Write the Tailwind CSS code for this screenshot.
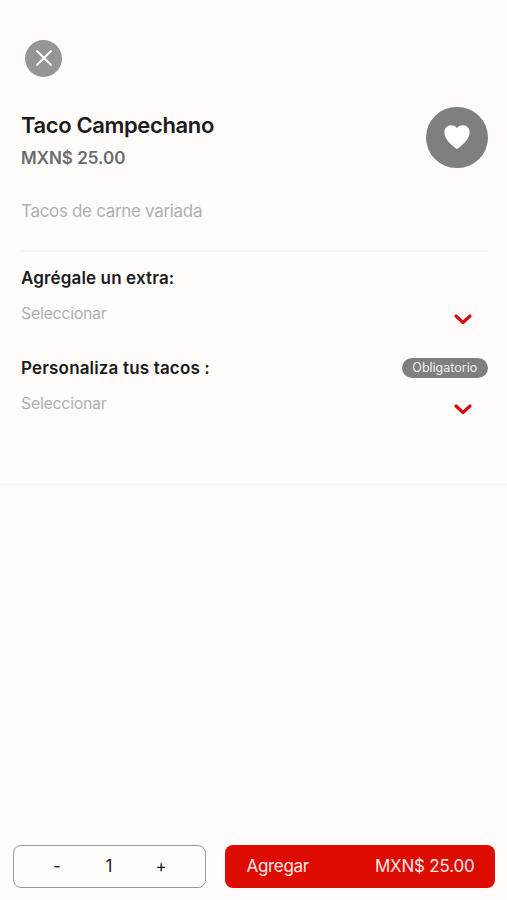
<!DOCTYPE html>
<html lang="es">
<head>
<meta charset="utf-8">
<title>Taco Campechano</title>
<script src="https://cdn.jsdelivr.net/npm/@tailwindcss/browser@4"></script>
</head>
<body class="bg-[#fffcfb]">
<div class="flex h-[900px] w-[507px] flex-col overflow-hidden bg-[#fffcfb] font-['Inter',sans-serif] text-[#1b1b1b]">
  <header class="flex h-[98px] shrink-0 items-start justify-between">
    <button aria-label="Cerrar" class="ml-[25px] mt-[39.5px] flex size-[37px] items-center justify-center rounded-full bg-[#969696]">
      <svg class="size-4" viewBox="0 0 16 16" fill="none" stroke="#fff" stroke-width="1.9" stroke-linecap="round"><path d="M1 1l14 14M15 1L1 15"/></svg>
    </button>
    <div class="mr-[13px] mt-[9px] h-[6px] w-[22px] rounded-sm bg-white"></div>
  </header>
  <main class="flex h-[388px] shrink-0 flex-col border-b-[3px] border-[#f8f6f5] pl-[21px] pr-[19.5px]">
    <section class="flex h-[154px] justify-between border-b-2 border-[#f8f6f5]">
      <div class="whitespace-nowrap">
        <h1 class="mt-[11px] text-[22px] font-semibold leading-[32px] tracking-[-0.37px]">Taco Campechano</h1>
        <p class="mt-[5px] text-[17px] font-semibold leading-[24px] text-[#6b6b6b]">MXN$ 25.00</p>
        <p class="mt-[29px] text-[17px] leading-[24px] tracking-[-0.32px] text-[#b1afae]">Tacos de carne variada</p>
      </div>
      <button aria-label="Favorito" class="mt-[8.5px] flex size-[61.5px] items-center justify-center rounded-full bg-[#7f7f7f]">
        <svg class="mb-[1px] h-[24px] w-[26px]" viewBox="0 0 26 24" fill="#fff"><path d="M13 24C9.600 21.200 0.400 15.200 0.400 7.400C0.400 3.200 3.200 0.300 6.900 0.300C9.800 0.300 12 1.400 13 3.200C14 1.400 16.200 0.300 19.100 0.300C22.800 0.300 25.600 3.200 25.600 7.400C25.600 15.200 16.400 21.200 13 24Z"/></svg>
      </button>
    </section>
    <section class="flex h-[90px] flex-col whitespace-nowrap pt-[14px]">
      <h2 class="text-[17px] font-semibold leading-[24px] tracking-[0.14px]">Agrégale un extra:</h2>
      <div class="mt-[11px] flex h-6 items-center justify-between pr-[16px]">
        <span class="text-[16px] leading-[24px] tracking-[-0.32px] text-[#b1afae]">Seleccionar</span>
        <svg class="mt-[12px] h-[11px] w-[18px]" viewBox="0 0 18 11" fill="none" stroke="#d20d0b" stroke-width="3.1" stroke-linecap="round" stroke-linejoin="round"><path d="M2 2L9 8.500L16 2"/></svg>
      </div>
    </section>
    <section class="flex flex-col whitespace-nowrap pt-[14px]">
      <div class="flex h-6 items-center justify-between">
        <h2 class="text-[17px] font-semibold leading-[24px] tracking-[0.16px]">Personaliza tus tacos :</h2>
        <span class="flex h-[20px] w-[85.5px] items-center justify-center rounded-full bg-[#7f7f7f] pt-px text-[12.500px] text-[#f1f1f1]">Obligatorio</span>
      </div>
      <div class="mt-[11px] flex h-6 items-center justify-between pr-[16px]">
        <span class="text-[16px] leading-[24px] tracking-[-0.32px] text-[#b1afae]">Seleccionar</span>
        <svg class="mt-[12px] h-[11px] w-[18px]" viewBox="0 0 18 11" fill="none" stroke="#d20d0b" stroke-width="3.1" stroke-linecap="round" stroke-linejoin="round"><path d="M2 2L9 8.500L16 2"/></svg>
      </div>
    </section>
  </main>
  <footer class="mt-auto mb-[12px] ml-[13px] mr-[12px] flex h-[43px] shrink-0 gap-[19px] text-[17px]">
    <div class="grid w-[193px] grid-cols-3 items-center rounded-lg border-[1.5px] border-[#999] pl-[17px] pr-[18px] pt-px text-center">
      <button>-</button><span>1</span><button>+</button>
    </div>
    <button class="flex flex-1 items-center justify-between rounded-lg bg-[#dd0b00] pl-[21.500px] pr-[20.500px] pt-px text-[#ffe8e6]">
      <span class="tracking-[-0.3px]">Agregar</span><span class="tracking-[-0.2px]">MXN$ 25.00</span>
    </button>
  </footer>
</div>
</body>
</html>
